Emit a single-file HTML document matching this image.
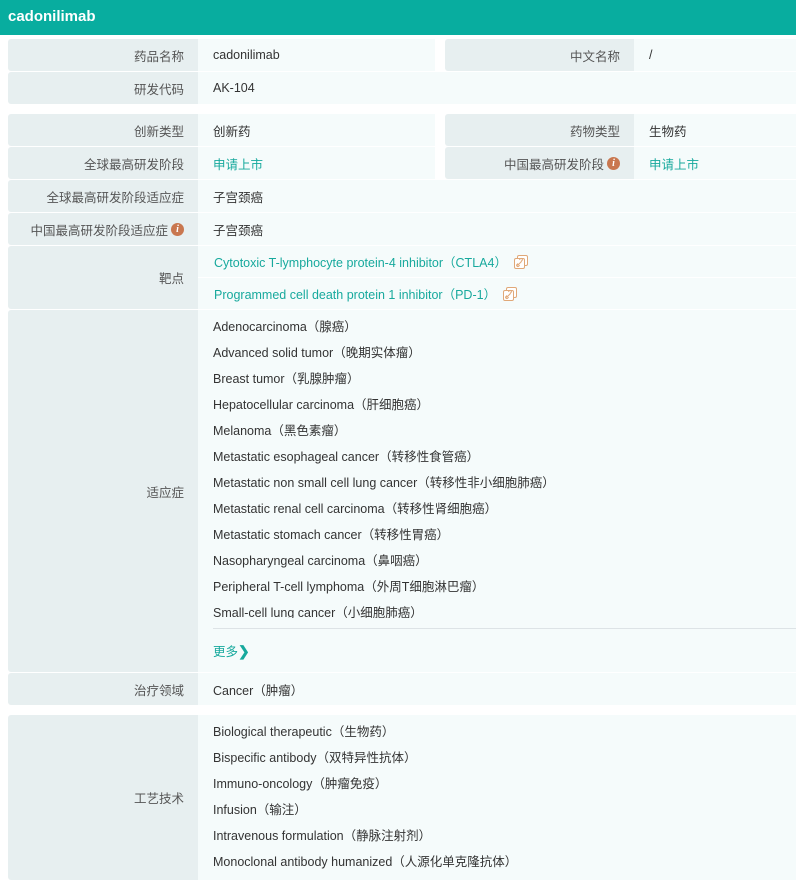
<!DOCTYPE html><html><head><meta charset="utf-8"><style>
*{margin:0;padding:0;box-sizing:border-box}
body{width:796px;height:872px;overflow:hidden;background:#fff;font-family:"Liberation Sans","Noto Sans CJK SC",sans-serif;font-size:12.5px;color:#333;position:relative}
.hd{position:absolute;left:0;top:0;width:796px;height:35px;background:#08ad9f;color:#fff;font-weight:bold;font-size:15px;padding:8px 0 0 8px}
.l{position:absolute;background:#e7eff0;color:#555;text-align:right;padding-right:14px;border-radius:3px 0 0 3px;display:flex;align-items:center;justify-content:flex-end}
.v{position:absolute;background:#f5fbfb;padding-left:15px;display:flex;align-items:center}
.t{color:#17a99d}
.i{display:inline-block;width:13px;height:13px;border-radius:50%;background:#c9774f;color:#fff;font-size:10px;font-style:italic;font-weight:bold;text-align:center;line-height:13px;margin-left:3px;font-family:"Liberation Serif",serif}
.lk{margin-left:7px;vertical-align:-2px}
.list div{position:absolute;left:213px}
</style></head><body>
<div class="hd">cadonilimab</div>

<div class="l" style="left:8px;top:39px;width:190px;height:32px">药品名称</div>
<div class="v" style="left:198px;top:39px;width:237px;height:32px">cadonilimab</div>
<div class="l" style="left:445px;top:39px;width:189px;height:32px">中文名称</div>
<div class="v" style="left:634px;top:39px;width:162px;height:32px">/</div>
<div class="l" style="left:8px;top:72px;width:190px;height:32px">研发代码</div>
<div class="v" style="left:198px;top:72px;width:598px;height:32px">AK-104</div>

<div class="l" style="left:8px;top:114px;width:190px;height:32px">创新类型</div>
<div class="v" style="left:198px;top:114px;width:237px;height:32px">创新药</div>
<div class="l" style="left:445px;top:114px;width:189px;height:32px">药物类型</div>
<div class="v" style="left:634px;top:114px;width:162px;height:32px">生物药</div>
<div class="l" style="left:8px;top:147px;width:190px;height:32px">全球最高研发阶段</div>
<div class="v t" style="left:198px;top:147px;width:237px;height:32px">申请上市</div>
<div class="l" style="left:445px;top:147px;width:189px;height:32px">中国最高研发阶段<span class="i">i</span></div>
<div class="v t" style="left:634px;top:147px;width:162px;height:32px">申请上市</div>
<div class="l" style="left:8px;top:180px;width:190px;height:32px">全球最高研发阶段适应症</div>
<div class="v" style="left:198px;top:180px;width:598px;height:32px">子宫颈癌</div>
<div class="l" style="left:8px;top:213px;width:190px;height:32px">中国最高研发阶段适应症<span class="i">i</span></div>
<div class="v" style="left:198px;top:213px;width:598px;height:32px">子宫颈癌</div>
<div class="l" style="left:8px;top:246px;width:190px;height:63px">靶点</div>
<div class="v t" style="left:198px;top:246px;width:598px;height:31px;padding-left:16px">Cytotoxic T-lymphocyte protein-4 inhibitor（CTLA4）<svg class="lk" width="14" height="14" viewBox="0 0 14 14"><rect x="3.5" y="0.5" width="10" height="10" rx="1.5" fill="#fff" stroke="#e0a878"/><rect x="0.5" y="3.5" width="10" height="10" rx="1.5" fill="#fff" stroke="#e0a878"/><path d="M3.5 10.5l4-4M4 8.5l-1 1a1.2 1.2 0 0 0 1.7 1.7l1-1M7 6.5l1-1a1.2 1.2 0 0 0-1.7-1.7l-1 1" stroke="#e0a878" fill="none" stroke-width="1"/></svg></div>
<div class="v t" style="left:198px;top:278px;width:598px;height:31px;padding-left:16px">Programmed cell death protein 1 inhibitor（PD-1）<svg class="lk" width="14" height="14" viewBox="0 0 14 14"><rect x="3.5" y="0.5" width="10" height="10" rx="1.5" fill="#fff" stroke="#e0a878"/><rect x="0.5" y="3.5" width="10" height="10" rx="1.5" fill="#fff" stroke="#e0a878"/><path d="M3.5 10.5l4-4M4 8.5l-1 1a1.2 1.2 0 0 0 1.7 1.7l1-1M7 6.5l1-1a1.2 1.2 0 0 0-1.7-1.7l-1 1" stroke="#e0a878" fill="none" stroke-width="1"/></svg></div>

<div class="l" style="left:8px;top:310px;width:190px;height:362px">适应症</div>
<div class="v" style="left:198px;top:310px;width:598px;height:362px"></div>
<div class="list">
<div style="top:316px">Adenocarcinoma（腺癌）</div>
<div style="top:342px">Advanced solid tumor（晚期实体瘤）</div>
<div style="top:368px">Breast tumor（乳腺肿瘤）</div>
<div style="top:394px">Hepatocellular carcinoma（肝细胞癌）</div>
<div style="top:420px">Melanoma（黑色素瘤）</div>
<div style="top:446px">Metastatic esophageal cancer（转移性食管癌）</div>
<div style="top:472px">Metastatic non small cell lung cancer（转移性非小细胞肺癌）</div>
<div style="top:498px">Metastatic renal cell carcinoma（转移性肾细胞癌）</div>
<div style="top:524px">Metastatic stomach cancer（转移性胃癌）</div>
<div style="top:550px">Nasopharyngeal carcinoma（鼻咽癌）</div>
<div style="top:576px">Peripheral T-cell lymphoma（外周T细胞淋巴瘤）</div>
<div style="top:602px;height:16px;overflow:hidden">Small-cell lung cancer（小细胞肺癌）</div>
<div style="top:628px;width:583px;height:1px;background:#dde3e6"></div>
<div class="t" style="top:641px">更多<b style="font-size:14px">❯</b></div>
</div>
<div class="l" style="left:8px;top:673px;width:190px;height:32px">治疗领域</div>
<div class="v" style="left:198px;top:673px;width:598px;height:32px">Cancer（肿瘤）</div>

<div class="l" style="left:8px;top:715px;width:190px;height:165px">工艺技术</div>
<div class="v" style="left:198px;top:715px;width:598px;height:165px"></div>
<div class="list">
<div style="top:721px">Biological therapeutic（生物药）</div>
<div style="top:747px">Bispecific antibody（双特异性抗体）</div>
<div style="top:773px">Immuno-oncology（肿瘤免疫）</div>
<div style="top:799px">Infusion（输注）</div>
<div style="top:825px">Intravenous formulation（静脉注射剂）</div>
<div style="top:851px">Monoclonal antibody humanized（人源化单克隆抗体）</div>
</div>
</body></html>
